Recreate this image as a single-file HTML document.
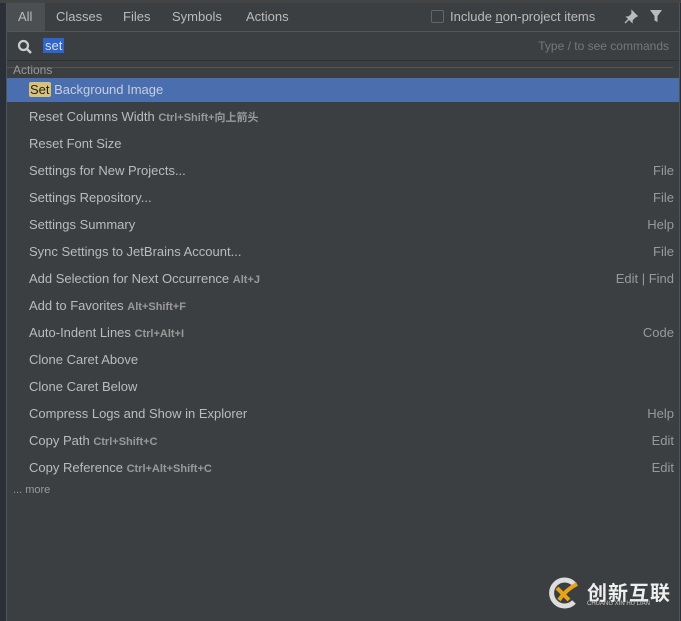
<!DOCTYPE html>
<html><head><style>
body{margin:0;width:681px;height:621px;background:#2b3038;overflow:hidden;font-family:"Liberation Sans","Noto Sans CJK SC",sans-serif;position:relative}
#p{position:absolute;left:6px;top:3px;width:672px;height:618px;background:#3c3f41;border-left:1px solid #50545a;border-right:1px solid #50545a}
.tabs{position:absolute;top:0;left:0;right:0;height:28px;border-bottom:1px solid #555}
.tab{position:absolute;top:6px;font-size:13px;color:#bbb}
.all{position:absolute;left:0;top:0;width:38px;height:28px;background:#4b4f52}
.search{position:absolute;top:29px;left:0;right:0;height:28px;border-bottom:1px solid #2f3133}
.r{position:absolute;left:22px;font-size:13px;color:#bbb;white-space:nowrap}
.r b{font-size:11px;color:#999;font-weight:bold}
.k{position:absolute;right:5px;font-size:13px;color:#999}
</style></head><body>
<div style="position:absolute;left:0;top:0;width:681px;height:3px;background:#444"></div>
<div id="p">
<div class="tabs">
<div class="all"></div>
<span class="tab" style="left:11px">All</span>
<span class="tab" style="left:49px">Classes</span>
<span class="tab" style="left:116px">Files</span>
<span class="tab" style="left:165px">Symbols</span>
<span class="tab" style="left:239px">Actions</span>
<div style="position:absolute;left:424px;top:7px;width:11px;height:11px;border:1px solid #666;border-radius:2px"></div>
<span class="tab" style="left:443px">Include <u>n</u>on-project items</span>
<svg style="position:absolute;left:616px;top:6px" width="16" height="16" viewBox="0 0 16 16"><path d="M9 2l5 5-2 1-3 3 0 2-5-5 2 0 3-3z M6 10l-4 4" fill="#bbb" stroke="#bbb" stroke-width="1.3"/></svg>
<svg style="position:absolute;left:642px;top:6px" width="14" height="14" viewBox="0 0 14 14"><path d="M1 1h12L8.5 7v6l-3-1.5V7z" fill="#bbb"/></svg>
</div>
<div class="search">
<svg style="position:absolute;left:10px;top:7px" width="16" height="16" viewBox="0 0 16 16"><circle cx="6.5" cy="6.5" r="4.5" fill="none" stroke="#ccc" stroke-width="2.2"/><path d="M10 10l4 4" stroke="#ccc" stroke-width="2.5"/></svg>
<span style="position:absolute;left:36px;top:6px;background:#2f65ca;color:#ddd;font-size:13px;padding:0 2px">set</span>
<span style="position:absolute;right:10px;top:7px;color:#777;font-size:12px">Type / to see commands</span>
</div>
<div style="position:absolute;top:64px;left:0;right:6px;border-top:1px solid #555"></div>
<span style="position:absolute;left:6px;top:60px;font-size:12px;color:#999">Actions</span>
<div style="position:absolute;top:75px;left:0;right:0;height:24px;background:#4b6eaf"></div>
<div class="r" style="top:79px"><span style="background:#d8c27a;color:#222;padding:0 1px;border-radius:2px">Set</span><span style="color:#c5cfe0"> Background Image</span></div>
<div class="r" style="top:106px">Reset Columns Width <b>Ctrl+Shift+向上箭头</b></div>
<div class="r" style="top:133px">Reset Font Size</div>
<div class="r" style="top:160px">Settings for New Projects...</div><span class="k" style="top:160px">File</span>
<div class="r" style="top:187px">Settings Repository...</div><span class="k" style="top:187px">File</span>
<div class="r" style="top:214px">Settings Summary</div><span class="k" style="top:214px">Help</span>
<div class="r" style="top:241px">Sync Settings to JetBrains Account...</div><span class="k" style="top:241px">File</span>
<div class="r" style="top:268px">Add Selection for Next Occurrence <b>Alt+J</b></div><span class="k" style="top:268px">Edit | Find</span>
<div class="r" style="top:295px">Add to Favorites <b>Alt+Shift+F</b></div>
<div class="r" style="top:322px">Auto-Indent Lines <b>Ctrl+Alt+I</b></div><span class="k" style="top:322px">Code</span>
<div class="r" style="top:349px">Clone Caret Above</div>
<div class="r" style="top:376px">Clone Caret Below</div>
<div class="r" style="top:403px">Compress Logs and Show in Explorer</div><span class="k" style="top:403px">Help</span>
<div class="r" style="top:430px">Copy Path <b>Ctrl+Shift+C</b></div><span class="k" style="top:430px">Edit</span>
<div class="r" style="top:457px">Copy Reference <b>Ctrl+Alt+Shift+C</b></div><span class="k" style="top:457px">Edit</span>
<span style="position:absolute;left:6px;top:481px;font-size:11px;color:#999">... more</span>
<svg style="position:absolute;left:540px;top:573px" width="34" height="34" viewBox="0 0 34 34"><path d="M27 8A13 13 0 1 0 27 26" fill="none" stroke="#ddd" stroke-width="5"/><path d="M10 12l12 12M30 8C22 12 16 18 12 24" stroke="#e8a317" stroke-width="4" fill="none"/></svg>
<span style="position:absolute;left:580px;top:574px;color:#eee;font-size:20px;font-weight:bold;letter-spacing:1px">创新互联</span>
<span style="position:absolute;left:580px;top:598px;color:#ccc;font-size:6px">CHUANG XIN HU LIAN</span>
</div>
</body></html>
